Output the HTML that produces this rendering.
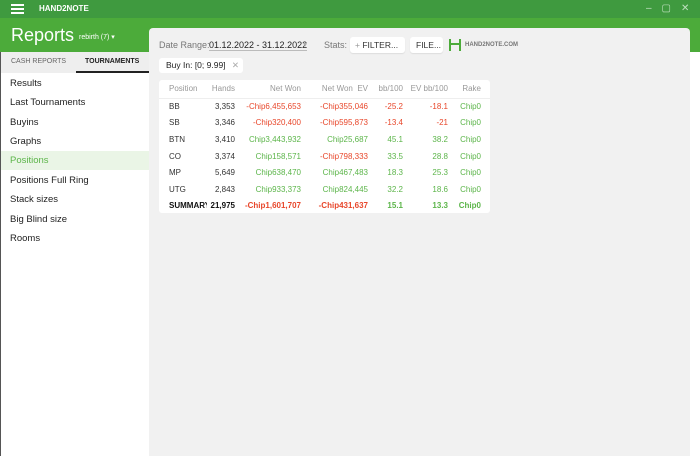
<!DOCTYPE html>
<html><head><style>
*{margin:0;padding:0;box-sizing:border-box}
body{width:700px;height:456px;overflow:hidden;background:#fff;font-family:"Liberation Sans",sans-serif;position:relative;font-size:9px;color:#333}
.abs{position:absolute}
#tb{left:0;top:0;width:700px;height:18px;background:#3f9a3f}
#gb{left:0;top:18px;width:700px;height:34px;background:#4cab3a}
#tabs{left:0;top:52px;width:149px;height:21px;background:#eee}
#content{left:149px;top:28px;width:541px;height:428px;background:#f1f1f1;border-radius:4px 4px 0 0}
.nav{left:10px;font-size:9.5px;color:#222}
.card{background:#fff;border-radius:3px}
table{border-collapse:collapse;font-size:8px;table-layout:fixed}
td{height:16.6px;padding:0;text-align:right;white-space:nowrap;overflow:hidden}
td:first-child{text-align:left;padding-left:10px}
.r{color:#e8472b}.g{color:#5cb54a}
thead td{color:#999;height:18px;border-bottom:1px solid #eee}
</style></head><body>
<div id="tb" class="abs"></div>
<div class="abs" style="left:11px;top:4px;width:13px;height:2px;background:#fff;box-shadow:0 4px 0 #fff,0 8px 0 #fff"></div>
<div class="abs" style="left:39px;top:4px;color:#fff;font-size:8px;font-weight:bold">HAND2NOTE</div>
<div class="abs" style="left:646px;top:3px;color:#bfe0bf;font-size:10px;letter-spacing:10px">–▢✕</div>
<div id="gb" class="abs"></div>
<div class="abs" style="left:11px;top:25px;color:#fff;font-size:18px">Reports</div>
<div class="abs" style="left:79px;top:33px;color:#fff;font-size:7px">rebirth (7) ▾</div>
<div id="tabs" class="abs"></div>
<div class="abs" style="left:11px;top:58px;font-size:7px;color:#666">CASH REPORTS</div>
<div class="abs" style="left:85px;top:58px;font-size:7px;color:#222;font-weight:bold">TOURNAMENTS</div>
<div class="abs" style="left:76px;top:71px;width:73px;height:2px;background:#222"></div>
<div class="abs" style="left:0;top:151px;width:149px;height:19px;background:#eaf5e6"></div>
<div class="abs nav" style="top:78px">Results</div>
<div class="abs nav" style="top:97px">Last Tournaments</div>
<div class="abs nav" style="top:117px">Buyins</div>
<div class="abs nav" style="top:136px">Graphs</div>
<div class="abs nav" style="top:155px;color:#5cb54a">Positions</div>
<div class="abs nav" style="top:175px">Positions Full Ring</div>
<div class="abs nav" style="top:194px">Stack sizes</div>
<div class="abs nav" style="top:214px">Big Blind size</div>
<div class="abs nav" style="top:233px">Rooms</div>
<div class="abs" style="left:0;top:52px;width:1px;height:404px;background:#555"></div>
<div id="content" class="abs"></div>
<div class="abs" style="left:159px;top:40px;font-size:9px;color:#777">Date Range:</div>
<div class="abs" style="left:209px;top:40px;font-size:9px;color:#222;border-bottom:1px solid #bbb">01.12.2022 - 31.12.2022</div>
<div class="abs" style="left:303px;top:40px;font-size:8px;color:#aaa">▾</div>
<div class="abs" style="left:324px;top:40px;font-size:9px;color:#777">Stats:</div>
<div class="abs card" style="left:350px;top:37px;width:55px;height:16px;font-size:8.5px;color:#333;padding:3px 0 0 5px;box-shadow:0 1px 1px #ddd"><span style="color:#999">+</span> FILTER...</div>
<div class="abs card" style="left:410px;top:37px;width:33px;height:16px;font-size:8.5px;color:#333;padding:3px 0 0 6px;box-shadow:0 1px 1px #ddd">FILE...</div>
<svg class="abs" style="left:448px;top:38px" width="14" height="14"><path d="M2 1v12M12 1v12M2 6h10" stroke="#4cab3a" stroke-width="2" fill="none"/></svg>
<div class="abs" style="left:465px;top:42px;font-size:6px;color:#777;font-weight:bold">HAND2NOTE.COM</div>
<div class="abs card" style="left:159px;top:58px;width:84px;height:15px;font-size:8.5px;color:#222;padding:2px 0 0 7px">Buy In: [0; 9.99] <span style="color:#aaa;margin-left:4px">✕</span></div>
<div class="abs card" style="left:159px;top:80px;width:331px;height:133px">
<table style="width:331px">
<colgroup><col style="width:48px"><col style="width:28px"><col style="width:66px"><col style="width:67px"><col style="width:35px"><col style="width:45px"><col style="width:33px"><col style="width:9px"></colgroup>
<thead><tr><td>Position</td><td>Hands</td><td>Net Won</td><td>Net Won&nbsp; EV</td><td>bb/100</td><td>EV bb/100</td><td>Rake</td><td></td></tr></thead>
<tr><td>BB</td><td>3,353</td><td class="r">-Chip6,455,653</td><td class="r">-Chip355,046</td><td class="r">-25.2</td><td class="r">-18.1</td><td class="g">Chip0</td><td></td></tr>
<tr><td>SB</td><td>3,346</td><td class="r">-Chip320,400</td><td class="r">-Chip595,873</td><td class="r">-13.4</td><td class="r">-21</td><td class="g">Chip0</td><td></td></tr>
<tr><td>BTN</td><td>3,410</td><td class="g">Chip3,443,932</td><td class="g">Chip25,687</td><td class="g">45.1</td><td class="g">38.2</td><td class="g">Chip0</td><td></td></tr>
<tr><td>CO</td><td>3,374</td><td class="g">Chip158,571</td><td class="r">-Chip798,333</td><td class="g">33.5</td><td class="g">28.8</td><td class="g">Chip0</td><td></td></tr>
<tr><td>MP</td><td>5,649</td><td class="g">Chip638,470</td><td class="g">Chip467,483</td><td class="g">18.3</td><td class="g">25.3</td><td class="g">Chip0</td><td></td></tr>
<tr><td>UTG</td><td>2,843</td><td class="g">Chip933,373</td><td class="g">Chip824,445</td><td class="g">32.2</td><td class="g">18.6</td><td class="g">Chip0</td><td></td></tr>
<tr style="font-weight:bold"><td style="color:#111">SUMMARY</td><td style="color:#111">21,975</td><td class="r">-Chip1,601,707</td><td class="r">-Chip431,637</td><td class="g">15.1</td><td class="g">13.3</td><td class="g">Chip0</td><td></td></tr>
</table></div>
</body></html>
